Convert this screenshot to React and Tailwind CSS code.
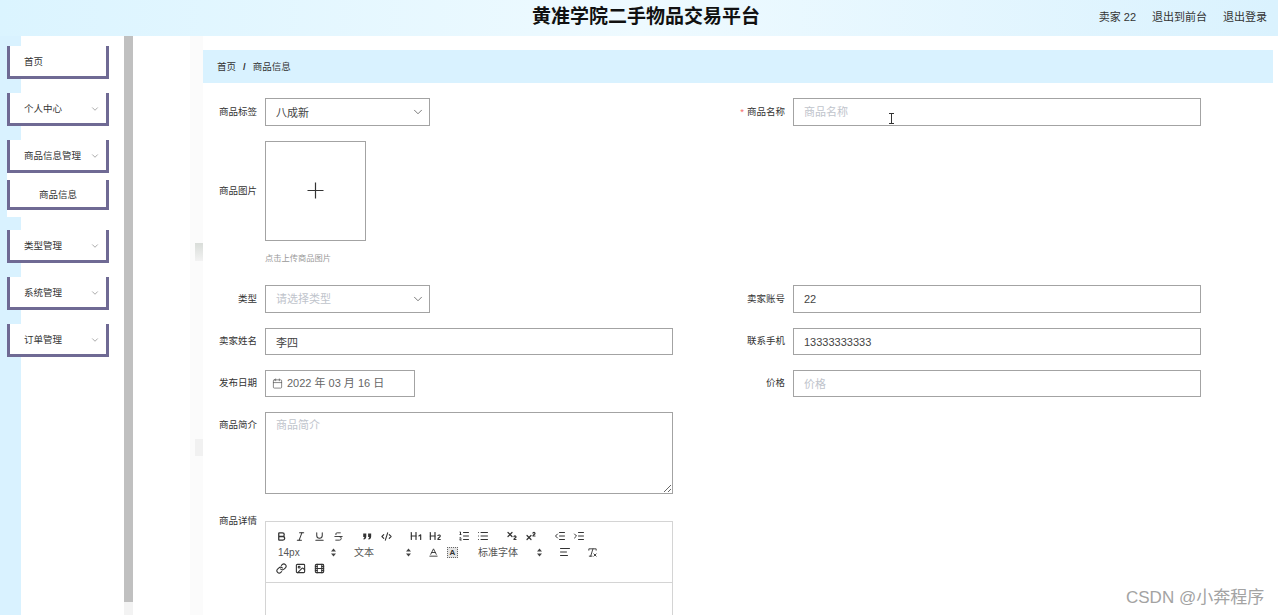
import React from 'react';
import {
  Bold, Italic, Underline, Strikethrough, CodeXml, Heading1, Heading2, ListOrdered, List,
  Subscript, Superscript, IndentDecrease, IndentIncrease, Baseline, AlignLeft, RemoveFormatting,
  Link, Image, Film, ChevronDown, Calendar,
} from 'lucide-react';

const menu = [
  { title: '首页' },
  { title: '个人中心', arrow: true },
  { title: '商品信息管理', arrow: true, children: ['商品信息'] },
  { title: '类型管理', arrow: true },
  { title: '系统管理', arrow: true },
  { title: '订单管理', arrow: true },
];

const QuoteIcon = () => (
  <svg width="11" height="11" viewBox="0 0 18 18" fill="#333">
    <path d="M2 4h5v5c0 3-2 5-4 5l-1-1c1-1 2-2 2-3H2z" />
    <path d="M10 4h5v5c0 3-2 5-4 5l-1-1c1-1 2-2 2-3h-2z" />
  </svg>
);

const PickerArrow = () => (
  <svg width="5" height="9" viewBox="0 0 5 9" fill="#444">
    <path d="M2.5 0.5 5 3.5H0z" />
    <path d="M2.5 8.5 0 5.5h5z" />
  </svg>
);

const ToolBtn = ({ icon: Icon, size = 11, stroke = 2, children, className = '' }) => (
  <span className={`w-[19px] h-[16px] flex items-center justify-center text-[#333] ${className}`}>
    {Icon ? <Icon size={size} strokeWidth={stroke} /> : children}
  </span>
);

const Picker = ({ label, className }) => (
  <span className={`flex items-center justify-between text-[10px] text-[#555] h-[16px] ${className}`}>
    <span>{label}</span>
    <PickerArrow />
  </span>
);

const Label = ({ children, required, className = 'h-full' }) => (
  <label className={`w-[54px] mr-2 shrink-0 flex items-center justify-end whitespace-nowrap text-[9.5px] text-[#333] ${className}`}>
    {required && <span className="text-[#f56c6c] mr-[3px]">*</span>}
    {children}
  </label>
);

const TextInput = ({ value, placeholder, className = '' }) => (
  <input
    readOnly
    value={value}
    placeholder={placeholder}
    className={`border border-[#a3a3a3] bg-white px-[10px] text-[11px] text-[#444] placeholder:text-[#c0c4cc] outline-none ${className}`}
  />
);

const SelectBox = ({ value, placeholder }) => (
  <div className="w-[165px] h-[28px] border border-[#a3a3a3] bg-white pl-[10px] pr-[4px] flex items-center justify-between text-[11px]">
    <span className={value ? 'text-[#444] mt-[2px]' : 'text-[#c0c4cc]'}>{value || placeholder}</span>
    <ChevronDown size={14} strokeWidth={1.2} className="text-[#444]" />
  </div>
);

const Field = ({ label, required, height, children }) => (
  <div className={`w-[528px] flex ${height}`}>
    <Label required={required}>{label}</Label>
    {children}
  </div>
);

const Sidebar = () => (
  <aside className="w-[124px] shrink-0 pl-[7px] pt-[10px] bg-[linear-gradient(90deg,#d9f2ff_21px,#ffffff_21px)]">
    {menu.map((item) => (
      <div key={item.title} className="w-[102px] mb-[14px]">
        <div className="h-[33px] pt-[2px] bg-white border-x-[3px] border-b-[3px] border-[#6f6a94] pl-[14px] pr-[6px] flex items-center justify-between text-[9.5px] text-[#333]">
          <span>{item.title}</span>
          {item.arrow && <ChevronDown size={10} strokeWidth={1.5} className="text-[#777]" />}
        </div>
        {item.children && (
          <div className="bg-white pt-[7px] pb-[7px] -mb-[1px]">
            {item.children.map((c) => (
              <div key={c} className="h-[30px] pt-[3px] border-x-[3px] border-b-[3px] border-[#6f6a94] flex items-center justify-center text-[9.5px] text-[#333]">
                {c}
              </div>
            ))}
          </div>
        )}
      </div>
    ))}
  </aside>
);

const Editor = () => (
  <div className="w-[408px] mt-[12px] border border-[#d4d4d4]">
    <div className="h-[61px] border-b border-[#d4d4d4] pl-[6px] pt-[6px]">
      <div className="flex">
        <ToolBtn icon={Bold} stroke={2.8} />
        <ToolBtn icon={Italic} stroke={2.2} />
        <ToolBtn icon={Underline} stroke={2.2} />
        <ToolBtn icon={Strikethrough} />
        <ToolBtn className="ml-[10px]"><QuoteIcon /></ToolBtn>
        <ToolBtn icon={CodeXml} stroke={2.4} />
        <ToolBtn icon={Heading1} size={14} className="ml-[10px]" />
        <ToolBtn icon={Heading2} size={14} />
        <ToolBtn icon={ListOrdered} size={12} className="ml-[10px]" />
        <ToolBtn icon={List} size={12} />
        <ToolBtn icon={Subscript} size={12} stroke={2.4} className="ml-[10px]" />
        <ToolBtn icon={Superscript} size={12} stroke={2.4} />
        <ToolBtn icon={IndentDecrease} size={12} className="ml-[10px]" />
        <ToolBtn icon={IndentIncrease} size={12} />
      </div>
      <div className="flex pl-[6px]">
        <Picker label="14px" className="w-[58px]" />
        <Picker label="文本" className="w-[57px] ml-[18px]" />
        <ToolBtn icon={Baseline} className="ml-[13px]" />
        <ToolBtn>
          <span className="w-[11px] h-[11px] border border-dotted border-[#666] bg-[#e4e4e4] text-[8px] leading-[9px] text-center font-bold text-[#333]">A</span>
        </ToolBtn>
        <Picker label="标准字体" className="w-[64px] ml-[16px]" />
        <ToolBtn icon={AlignLeft} size={12} className="ml-[13px]" />
        <ToolBtn icon={RemoveFormatting} className="ml-[9px]" />
      </div>
      <div className="flex">
        <ToolBtn icon={Link} stroke={2.4} />
        <ToolBtn icon={Image} stroke={2.4} />
        <ToolBtn icon={Film} stroke={2.4} />
      </div>
    </div>
    <div className="h-[160px] bg-white" />
  </div>
);

const App = () => (
  <div className="relative w-full h-screen overflow-hidden bg-white flex flex-col font-['Liberation_Sans','Noto_Sans_CJK_SC',sans-serif]">
    <header className="h-[36px] shrink-0 relative flex items-center justify-end pr-[11px] pb-[2px] bg-gradient-to-r from-[#dbf4ff] via-[#eefaff] to-[#daf2fe]">
      <h1 className="absolute left-[532px] top-[5px] text-[19px] leading-[24px] font-bold text-[#111]">黄准学院二手物品交易平台</h1>
      <div className="flex gap-4 text-[11px] text-[#333]">
        <span>卖家 22</span>
        <span>退出到前台</span>
        <span>退出登录</span>
      </div>
    </header>

    <div className="flex flex-1 min-h-0">
      <Sidebar />
      <div className="w-[9px] shrink-0 bg-[#f3f3f3]">
        <div className="h-[566px] bg-[#c0c0c0]" />
      </div>
      <div className="w-[57px] shrink-0" />
      <div className="w-[13px] shrink-0 bg-[#fbfbfb] pt-[207px] pl-[5px]">
        <div className="h-[18px] bg-gradient-to-b from-[#d9ddd9] to-[#f2f2f2]" />
        <div className="h-[17px] mt-[178px] bg-[#f1f1f1]" />
      </div>

      <main className="flex-1 min-w-0 pt-[14px] pr-[5px]">
        <div className="h-[33px] pt-[1px] bg-[#d9f2ff] pl-[14px] flex items-center gap-[7px] text-[9.5px] text-[#333]">
          <span>首页</span>
          <span className="font-bold">/</span>
          <span>商品信息</span>
        </div>

        <form className="pt-[15px] flex flex-col gap-[15px]">
          <div className="flex">
            <Field label="商品标签" height="h-[28px]">
              <SelectBox value="八成新" />
            </Field>
            <Field label="商品名称" required height="h-[28px]">
              <TextInput placeholder="商品名称" className="w-[408px] h-[28px]" />
            </Field>
          </div>

          <div className="flex h-[129px]">
            <Label className="h-[100px]">商品图片</Label>
            <div>
              <div className="w-[101px] h-[100px] border border-[#a3a3a3] flex items-center justify-center pb-[1px]">
                <svg width="17" height="17" viewBox="0 0 17 17" stroke="#333" strokeWidth="1.2">
                  <path d="M8.5 0.5v16M0.5 8.5h16" />
                </svg>
              </div>
              <p className="mt-[12px] text-[8.25px] leading-[12px] text-[#999]">点击上传商品图片</p>
            </div>
          </div>

          <div className="flex">
            <Field label="类型" height="h-[28px]">
              <SelectBox placeholder="请选择类型" />
            </Field>
            <Field label="卖家账号" height="h-[28px]">
              <TextInput value="22" className="w-[408px] h-[28px]" />
            </Field>
          </div>

          <div className="flex">
            <Field label="卖家姓名" height="h-[27px]">
              <TextInput value="李四" className="w-[408px] h-[27px]" />
            </Field>
            <Field label="联系手机" height="h-[27px]">
              <TextInput value="13333333333" className="w-[408px] h-[27px]" />
            </Field>
          </div>

          <div className="flex">
            <Field label="发布日期" height="h-[27px]">
              <div className="w-[150px] h-[27px] border border-[#a3a3a3] pl-[6px] flex items-center gap-[4px] text-[11px] text-[#666]">
                <Calendar size={11} strokeWidth={1.5} className="text-[#555]" />
                <span>2022 年 03 月 16 日</span>
              </div>
            </Field>
            <Field label="价格" height="h-[27px]">
              <TextInput placeholder="价格" className="w-[408px] h-[27px]" />
            </Field>
          </div>

          <div className="flex">
            <Label className="h-[26px]">商品简介</Label>
            <textarea
              readOnly
              placeholder="商品简介"
              className="w-[408px] h-[82px] border border-[#a3a3a3] px-[10px] py-[5px] text-[11px] leading-[14px] placeholder:text-[#c0c4cc] outline-none"
            />
          </div>

          <div className="flex">
            <Label className="h-[24px]">商品详情</Label>
            <Editor />
          </div>
        </form>
      </main>
    </div>

    {/* text cursor caught in the screenshot */}
    <svg className="absolute left-[888px] top-[113px]" width="7" height="11" viewBox="0 0 7 11" fill="none" stroke="#333" strokeWidth="1">
      <path d="M1 0.5h5M3.5 0.5v10M1 10.5h5" />
    </svg>
    <div className="absolute left-[1126px] top-[587px] text-[17px] leading-[22px] text-[#a3a3a3] whitespace-nowrap">CSDN @小奔程序</div>
  </div>
);

export default App;
